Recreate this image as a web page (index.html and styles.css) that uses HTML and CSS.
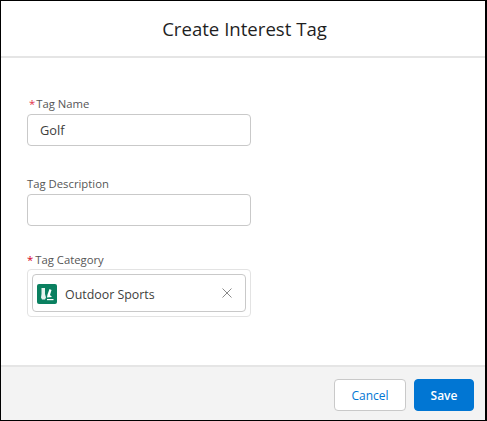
FILE: index.html
```html
<!DOCTYPE html>
<html lang="en">
<head>
    <meta charset="UTF-8">
    <title>Create Interest Tag</title>
    <link rel="stylesheet" href="styles.css">
</head>
<body>
<section class="modal">
    <header class="modal-header">
        <h1>Create Interest Tag</h1>
    </header>
    <form class="modal-body">
        <div class="field field-name">
            <label><span class="required">*</span>Tag Name</label>
            <div class="input">Golf</div>
        </div>
        <div class="field field-description">
            <label>Tag Description</label>
            <div class="input"></div>
        </div>
        <div class="field field-category">
            <label class="label-strong"><span class="required">*</span>Tag Category</label>
            <div class="lookup">
                <div class="pill">
                    <span class="pill-icon">
                        <svg width="20" height="20" viewBox="0 0 20 20">
                            <path d="M4.500 4h3.500v6l1 3.500-1 2H5l-1-2 0.500-3.500z" fill="#fff" opacity="0.9"/>
                            <path d="M12.500 5l2 1-1.500 5 2 2-5 0.500 0.500-3z" fill="#fff"/>
                            <path d="M10 15h6.500v1.200H10z" fill="#fff"/>
                        </svg>
                    </span>
                    <span class="pill-text">Outdoor Sports</span>
                    <svg class="pill-close" width="10" height="10" viewBox="0 0 10 10">
                        <path d="M0.500 0.500l9 9M9.500 0.500l-9 9" stroke="#8a8a8a" stroke-width="1" fill="none"/>
                    </svg>
                </div>
            </div>
        </div>
    </form>
    <footer class="modal-footer">
        <button type="button" class="btn btn-neutral">Cancel</button>
        <button type="button" class="btn btn-brand">Save</button>
    </footer>
</section>
</body>
</html>
```

FILE: styles.css
```css
*{
    box-sizing: border-box;
}

body{
    margin:0;
    padding:0;
    font-family: "Open Sans", "Noto Sans", Arial, sans-serif;
    color:#3e3e3c;
}

.modal{
    width:487px;
    height:421px;
    display:flex;
    flex-direction:column;
    border:1px solid #000;
    border-width:1px 2px 1px 1px;
    background:#fff;
}

.modal-header{
    height:57px;
    flex:none;
    display:flex;
    align-items:center;
    justify-content:center;
    padding-left:3px;
    border-bottom:2px solid #e5e5e5;
}

.modal-header h1{
    margin:0;
    font-size:18.600px;
    font-weight:400;
    color:#1f1f1f;
}

.modal-body{
    flex:1;
    padding:38px 0 0 26px;
}

.field{
    width:224px;
}

.field label{
    display:block;
    height:17px;
    font-size:11.300px;
    line-height:15px;
    color:#565656;
}

.field-description{
    margin-top:30px;
}

.field-category{
    margin-top:26px;
}

.required{
    color:#e3324a;
    margin:0 1px 0 2px;
}

.label-strong .required{
    color:#d4001c;
    margin:0 2px 0 0;
}

.input{
    height:32px;
    margin-top:1px;
    padding:0 12px;
    border:1px solid #c9c9c9;
    border-radius:4px;
    font-size:12.800px;
    line-height:30px;
    color:#3e3e3c;
}

.lookup{
    height:48px;
    padding:4px;
    border:1px solid #e3e3e3;
    border-radius:4px;
}

.pill{
    height:38px;
    display:flex;
    align-items:center;
    padding:0 13px 0 4px;
    border:1px solid #c9c9c9;
    border-radius:4px;
}

.pill-icon{
    width:20px;
    height:20px;
    flex:none;
    margin-top:1px;
    background:#0a8060;
    border-radius:2px;
}

.pill-icon svg{
    display:block;
}

.pill-text{
    flex:1;
    margin:2px 0 0 8px;
    font-size:12.400px;
    color:#3e3e3c;
}

.pill-close{
    flex:none;
    margin-top:-1px;
}

.modal-footer{
    height:55px;
    flex:none;
    display:flex;
    justify-content:flex-end;
    align-items:flex-start;
    gap:8px;
    padding:12px 11px 0 0;
    background:#f3f3f3;
    border-top:2px solid #e5e5e5;
}

.btn{
    height:32px;
    padding:0;
    border-radius:4px;
    font-family:inherit;
    font-size:12px;
}

.btn-neutral{
    width:72px;
    background:#fff;
    border:1px solid #c9c9c9;
    color:#0176d3;
}

.btn-brand{
    width:60px;
    background:#0176d3;
    border:1px solid #0176d3;
    color:#fff;
    font-weight:600;
}
```
